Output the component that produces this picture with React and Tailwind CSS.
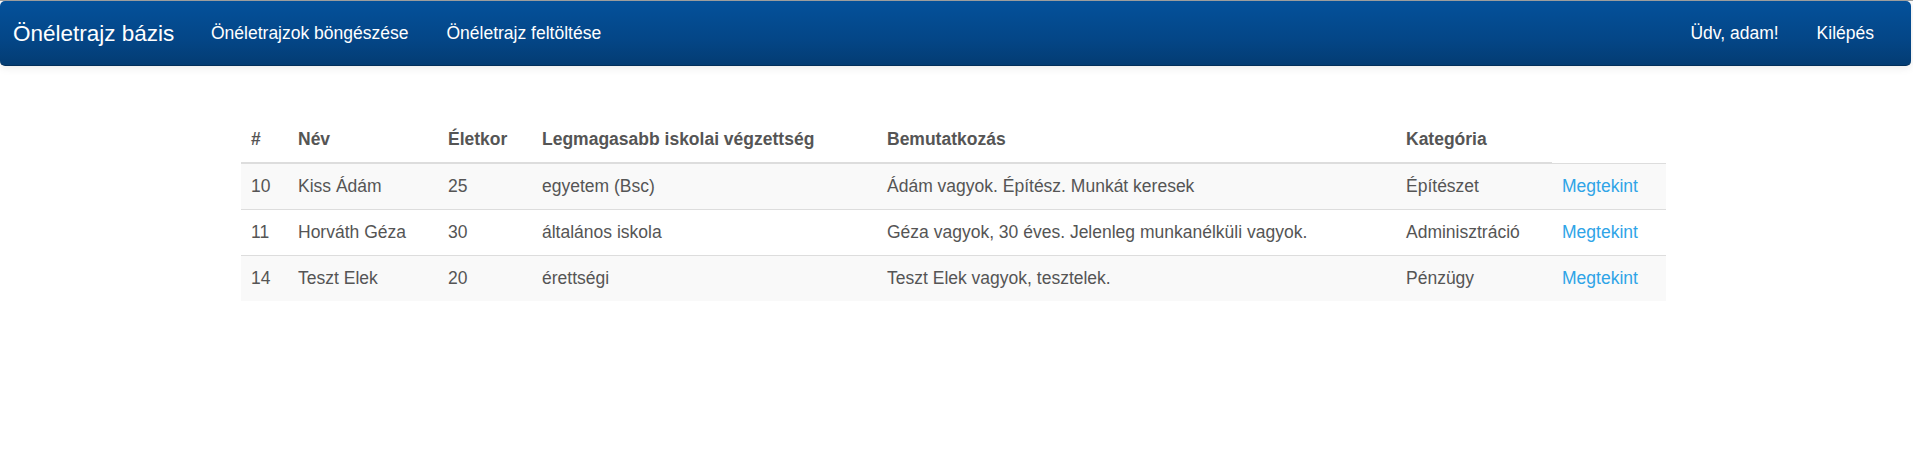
import React from 'react';

const rows = [
  { id: 10, name: 'Kiss Ádám', age: 25, school: 'egyetem (Bsc)', intro: 'Ádám vagyok. Építész. Munkát keresek', category: 'Építészet' },
  { id: 11, name: 'Horváth Géza', age: 30, school: 'általános iskola', intro: 'Géza vagyok, 30 éves. Jelenleg munkanélküli vagyok.', category: 'Adminisztráció' },
  { id: 14, name: 'Teszt Elek', age: 20, school: 'érettségi', intro: 'Teszt Elek vagyok, tesztelek.', category: 'Pénzügy' },
];

const headers = ['#', 'Név', 'Életkor', 'Legmagasabb iskolai végzettség', 'Bemutatkozás', 'Kategória'];

export default function App() {
  return (
    <div className="min-h-screen bg-white font-['Liberation_Sans',Arial,sans-serif] text-[17.5px] leading-[25px] text-[#555]">
      <div className="border-t border-[#a3a3a3]">
        <nav className="mr-[2px] flex h-[65px] items-center rounded-[5px] border-b border-[#022f5a] bg-[linear-gradient(#04519b,#044687_60%,#033c73)] text-white shadow-[0_1px_10px_rgba(0,0,0,0.1)]">
          <a className="w-[192px] pl-[13px] text-[22.5px] leading-[25px]">Önéletrajz bázis</a>
          <ul className="flex">
            <li><a className="px-[19px]">Önéletrajzok böngészése</a></li>
            <li><a className="px-[19px]">Önéletrajz feltöltése</a></li>
          </ul>
          <ul className="ml-auto flex pr-[18px]">
            <li><a className="px-[19px]">Üdv, adam!</a></li>
            <li><a className="px-[19px]">Kilépés</a></li>
          </ul>
        </nav>
      </div>

      <div className="mx-auto mt-[51px] w-[1431px]">
        <table className="w-[1425px] table-fixed border-collapse">
          <colgroup>
            <col className="w-[47px]" />
            <col className="w-[150px]" />
            <col className="w-[94px]" />
            <col className="w-[345px]" />
            <col className="w-[519px]" />
            <col className="w-[156px]" />
            <col className="w-[114px]" />
          </colgroup>
          <thead>
            <tr>
              {headers.map((h) => (
                <th key={h} className="border-b-2 border-[#ddd] px-[10px] py-[10px] text-left font-bold">
                  {h}
                </th>
              ))}
            </tr>
          </thead>
          <tbody>
            {rows.map((r, i) => (
              <tr key={r.id} className={i % 2 === 0 ? 'bg-[#f9f9f9]' : 'bg-white'}>
                <td className="border-t border-[#ddd] px-[10px] py-[10px]">{r.id}</td>
                <td className="border-t border-[#ddd] px-[10px] py-[10px]">{r.name}</td>
                <td className="border-t border-[#ddd] px-[10px] py-[10px]">{r.age}</td>
                <td className="border-t border-[#ddd] px-[10px] py-[10px]">{r.school}</td>
                <td className="border-t border-[#ddd] px-[10px] py-[10px]">{r.intro}</td>
                <td className="border-t border-[#ddd] px-[10px] py-[10px]">{r.category}</td>
                <td className="border-t border-[#ddd] px-[10px] py-[10px]">
                  <a className="text-[#2fa4e7]">Megtekint</a>
                </td>
              </tr>
            ))}
          </tbody>
        </table>
      </div>
    </div>
  );
}
